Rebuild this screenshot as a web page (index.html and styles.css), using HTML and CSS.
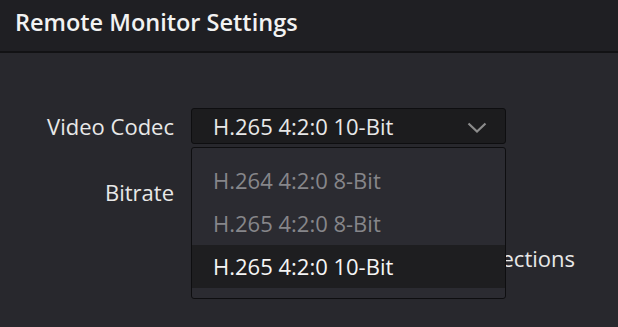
FILE: index.html
```html
<!DOCTYPE html>
<html lang="en">
<head>
  <meta charset="UTF-8" />
  <title>Remote Monitor Settings</title>
  <link rel="stylesheet" href="styles.css">
</head>
<body>
  <div class="header">Remote Monitor Settings</div>
  <div class="panel">
    <div class="row">
      <label class="label">Video Codec</label>
      <div class="select-wrap">
        <div class="select">
          <span>H.265 4:2:0 10-Bit</span>
          <svg class="chevron" width="20" height="11" viewBox="0 0 20 11">
            <path d="M1.5 1.5 L10 9.5 L18.5 1.5" fill="none" stroke="#8c8c8c" stroke-width="2.2" />
          </svg>
        </div>
        <ul class="menu">
          <li class="disabled">H.264 4:2:0 8-Bit</li>
          <li class="disabled">H.265 4:2:0 8-Bit</li>
          <li class="active">H.265 4:2:0 10-Bit</li>
        </ul>
      </div>
    </div>
    <div class="row">
      <label class="label">Bitrate</label>
    </div>
    <div class="row">
      <span class="behind">Connections</span>
    </div>
  </div>
</body>
</html>
```

FILE: styles.css
```css
body {
  margin: 0;
  background: #28282d;
  font-family: 'Open Sans', 'Noto Sans', sans-serif;
  color: #e8e8e8;
  overflow: hidden;
  height: 327px;
}

.header {
  height: 53px;
  box-sizing: border-box;
  padding: 6px 0 0 15px;
  background: #1f1f23;
  border-bottom: 2px solid #121214;
  font-size: 23.5px;
  font-weight: 600;
  color: #f2f2f2;
}

.panel {
  padding-top: 40px;
}

.row {
  display: flex;
  align-items: center;
  height: 66px;
}

.label {
  width: 191px;
  flex-shrink: 0;
  text-align: right;
  font-size: 22px;
  padding-right: 17px;
  box-sizing: border-box;
}

.select-wrap {
  position: relative;
  width: 315px;
}

.select {
  display: flex;
  align-items: center;
  justify-content: space-between;
  height: 36px;
  box-sizing: border-box;
  padding: 0 18px 0 21px;
  background: #1c1c1e;
  border: 1px solid #0e0e10;
  border-radius: 3px;
  font-size: 22px;
}

.chevron {
  margin-top: 3px;
}

.menu {
  position: absolute;
  top: 39px;
  left: 0;
  width: 315px;
  box-sizing: border-box;
  margin: 0;
  padding: 11px 0 10px;
  list-style: none;
  background: #2b2b31;
  border: 1px solid #0e0e10;
  border-radius: 3px;
  z-index: 2;
}

.menu li {
  height: 43px;
  line-height: 43px;
  padding-left: 21px;
  font-size: 22px;
}

.menu .disabled {
  color: #86868a;
}

.menu .active {
  background: #1e1e20;
  color: #f5f5f5;
}

.behind {
  margin-left: auto;
  padding-right: 43px;
  font-size: 22px;
}
```
